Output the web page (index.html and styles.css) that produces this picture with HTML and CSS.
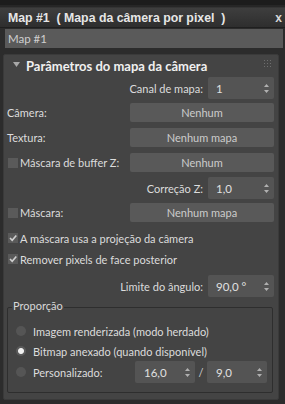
FILE: index.html
```html
<!DOCTYPE html>
<html>
<head>
<meta charset="utf-8">
<link rel="stylesheet" href="styles.css">
</head>
<body>
<div class="frame">
  <div class="topstrip"></div>
  <div class="titlebar">
    <span class="title">Map #1&nbsp; ( Mapa da câmera por pixel&nbsp; )</span>
    <span class="close">x</span>
  </div>
  <div class="namebar">Map #1</div>
  <div class="panel">
    <div class="phead">
      <svg class="tri" width="7" height="5" viewBox="0 0 7 5"><path d="M0 0H7L3.5 5Z" fill="#a8a8a8"/></svg>
      <span class="ptitle">Parâmetros do mapa da câmera</span>
      <svg class="grip" width="7" height="7" viewBox="0 0 7 7"><g fill="#6e6e6e"><rect x="0" y="0" width="1" height="1"/><rect x="3" y="0" width="1" height="1"/><rect x="6" y="0" width="1" height="1"/><rect x="0" y="3" width="1" height="1"/><rect x="3" y="3" width="1" height="1"/><rect x="6" y="3" width="1" height="1"/><rect x="0" y="6" width="1" height="1"/><rect x="3" y="6" width="1" height="1"/><rect x="6" y="6" width="1" height="1"/></g></svg>
    </div>

    <div class="row right r-canal">
      <span class="lbl">Canal de mapa:</span>
      <div class="spin"><span>1</span><svg class="arr" width="5" height="9" viewBox="0 0 5 9"><path d="M2.5 0L5 3H0Z M2.5 9L5 6H0Z" fill="#b0b0b0"/></svg></div>
    </div>

    <div class="row r-cam">
      <span class="lbl">Câmera:</span>
      <div class="btn">Nenhum</div>
    </div>

    <div class="row r-tex">
      <span class="lbl">Textura:</span>
      <div class="btn">Nenhum mapa</div>
    </div>

    <div class="row r-zbuf">
      <span class="lbl chk-lbl"><span class="chk"></span>Máscara de buffer Z:</span>
      <div class="btn">Nenhum</div>
    </div>

    <div class="row right r-corr">
      <span class="lbl">Correção Z:</span>
      <div class="spin"><span>1,0</span><svg class="arr" width="5" height="9" viewBox="0 0 5 9"><path d="M2.5 0L5 3H0Z M2.5 9L5 6H0Z" fill="#b0b0b0"/></svg></div>
    </div>

    <div class="row r-mask">
      <span class="lbl chk-lbl"><span class="chk"></span>Máscara:</span>
      <div class="btn">Nenhum mapa</div>
    </div>

    <div class="line r-proj">
      <span class="chk on"><svg width="10" height="10" viewBox="0 0 10 10"><path d="M2 5L4.2 7.3L8.3 2.5" stroke="#d0d0d0" stroke-width="1.6" fill="none"/></svg></span>A máscara usa a projeção da câmera
    </div>

    <div class="line r-rem">
      <span class="chk on"><svg width="10" height="10" viewBox="0 0 10 10"><path d="M2 5L4.2 7.3L8.3 2.5" stroke="#d0d0d0" stroke-width="1.6" fill="none"/></svg></span>Remover pixels de face posterior
    </div>

    <div class="row right r-lim">
      <span class="lbl">Limite do ângulo:</span>
      <div class="spin"><span>90,0 °</span><svg class="arr" width="5" height="9" viewBox="0 0 5 9"><path d="M2.5 0L5 3H0Z M2.5 9L5 6H0Z" fill="#b0b0b0"/></svg></div>
    </div>

    <div class="group">
      <span class="legend">Proporção</span>
      <div class="radio-line"><span class="radio"></span>Imagem renderizada (modo herdado)</div>
      <div class="radio-line"><span class="radio sel"></span>Bitmap anexado (quando disponível)</div>
      <div class="radio-line custom">
        <span class="radio"></span><span class="clbl">Personalizado:</span>
        <div class="spin small"><span>16,0</span><svg class="arr" width="5" height="9" viewBox="0 0 5 9"><path d="M2.5 0L5 3H0Z M2.5 9L5 6H0Z" fill="#b0b0b0"/></svg></div>
        <span class="slash">/</span>
        <div class="spin small"><span>9,0</span><svg class="arr" width="5" height="9" viewBox="0 0 5 9"><path d="M2.5 0L5 3H0Z M2.5 9L5 6H0Z" fill="#b0b0b0"/></svg></div>
      </div>
    </div>
  </div>
</div>
</body>
</html>
```

FILE: styles.css
```css
* { box-sizing: border-box; }
html, body { margin: 0; padding: 0; }
body {
  width: 285px;
  height: 404px;
  background: #2c2c2c;
  font-family: Lato, "Noto Sans", sans-serif;
  font-size: 11px;
  color: #dcdcdc;
  overflow: hidden;
}
.frame { width: 285px; height: 404px; }
.topstrip {
  height: 8px;
  background: #1c1c1c;
  border-bottom: 1px solid #343434;
  box-shadow: inset 0 -2px 0 #262626;
}
.titlebar {
  height: 20px;
  background: linear-gradient(#3e3e3e, #2e2e2e);
  display: flex;
  align-items: center;
  justify-content: space-between;
  padding: 0 3px 0 8px;
  border-bottom: 1px solid #1f1f1f;
}
.title {
  font-family: "Liberation Sans", Arial, sans-serif;
  font-weight: bold;
  font-size: 12.3px;
  color: #e6e6e6;
  white-space: nowrap;
}
.close {
  font-family: "Liberation Sans", Arial, sans-serif;
  font-weight: bold;
  font-size: 12px;
  color: #d8d8d8;
}
.namebar {
  margin: 1px 2px 0 5px;
  height: 19px;
  background: #5a5a5a;
  color: #cfcfcf;
  padding-left: 3px;
  line-height: 19px;
  font-size: 11.5px;
}
.panel {
  margin: 6px 6px 0 3px;
  height: 346px;
  background: #444444;
  border: 1px solid #3a3a3a;
  border-radius: 2px;
  padding: 0 4px 0 3px;
}
.phead {
  height: 21px;
  display: flex;
  align-items: center;
  position: relative;
  padding-left: 6px;
}
.tri { margin-right: 6px; margin-top: -2px; }
.ptitle {
  font-weight: bold;
  font-size: 13px;
  color: #f0f0f0;
}
.grip { position: absolute; right: 3px; top: 5px; }

.row {
  display: flex;
  align-items: center;
  justify-content: space-between;
}
.row.right { justify-content: flex-end; gap: 5px; }
.lbl { white-space: nowrap; }
.spin {
  width: 66px;
  height: 22px;
  background: #545454;
  border-radius: 2px;
  display: flex;
  align-items: center;
  justify-content: space-between;
  padding: 0 5px 0 8px;
  color: #e0e0e0;
  font-size: 11.5px;
}
.btn {
  width: 144px;
  height: 19px;
  background: #595959;
  border-radius: 2px;
  display: flex;
  align-items: center;
  justify-content: center;
  color: #cccccc;
}
.r-canal { height: 22px; margin-top: 1px; }
.r-cam { height: 19px; margin-top: 4px; }
.r-tex { height: 19px; margin-top: 6px; }
.r-zbuf { height: 19px; margin-top: 6px; }
.r-corr { height: 22px; margin-top: 5px; }
.r-mask { height: 19px; margin-top: 4px; }
.chk-lbl { display: flex; align-items: center; margin-left: 1px; }
.chk {
  display: inline-flex;
  width: 10px;
  height: 10px;
  background: #5a5a5a;
  margin-right: 2px;
  align-items: center;
  justify-content: center;
}
.line {
  display: flex;
  align-items: center;
  height: 16px;
  margin-left: 1px;
  white-space: nowrap;
}
.r-proj { margin-top: 8px; }
.r-rem { margin-top: 5px; }
.r-lim { height: 22px; margin-top: 8px; }

.group {
  position: relative;
  margin: 10px 1px 0 0;
  height: 86px;
  border: 1px solid #2e2e2e;
  border-radius: 2px;
  padding: 13px 0 0 8px;
}
.legend {
  position: absolute;
  left: 4px;
  top: -9px;
  background: #444444;
  padding: 0 1px;
  color: #d8d8d8;
}
.radio-line {
  display: flex;
  align-items: center;
  height: 20px;
  white-space: nowrap;
}
.radio {
  width: 10px;
  height: 10px;
  border-radius: 50%;
  background: #555555;
  margin-right: 7px;
  flex: none;
}
.radio.sel {
  background: radial-gradient(circle, #f0f0f0 0 2.5px, #5a5a5a 3.5px);
}
.custom { height: 22px; }
.clbl { width: 102px; }
.spin.small { width: 60px; padding-left: 9px; }
.slash { width: 12px; text-align: center; color: #d0d0d0; }
```
